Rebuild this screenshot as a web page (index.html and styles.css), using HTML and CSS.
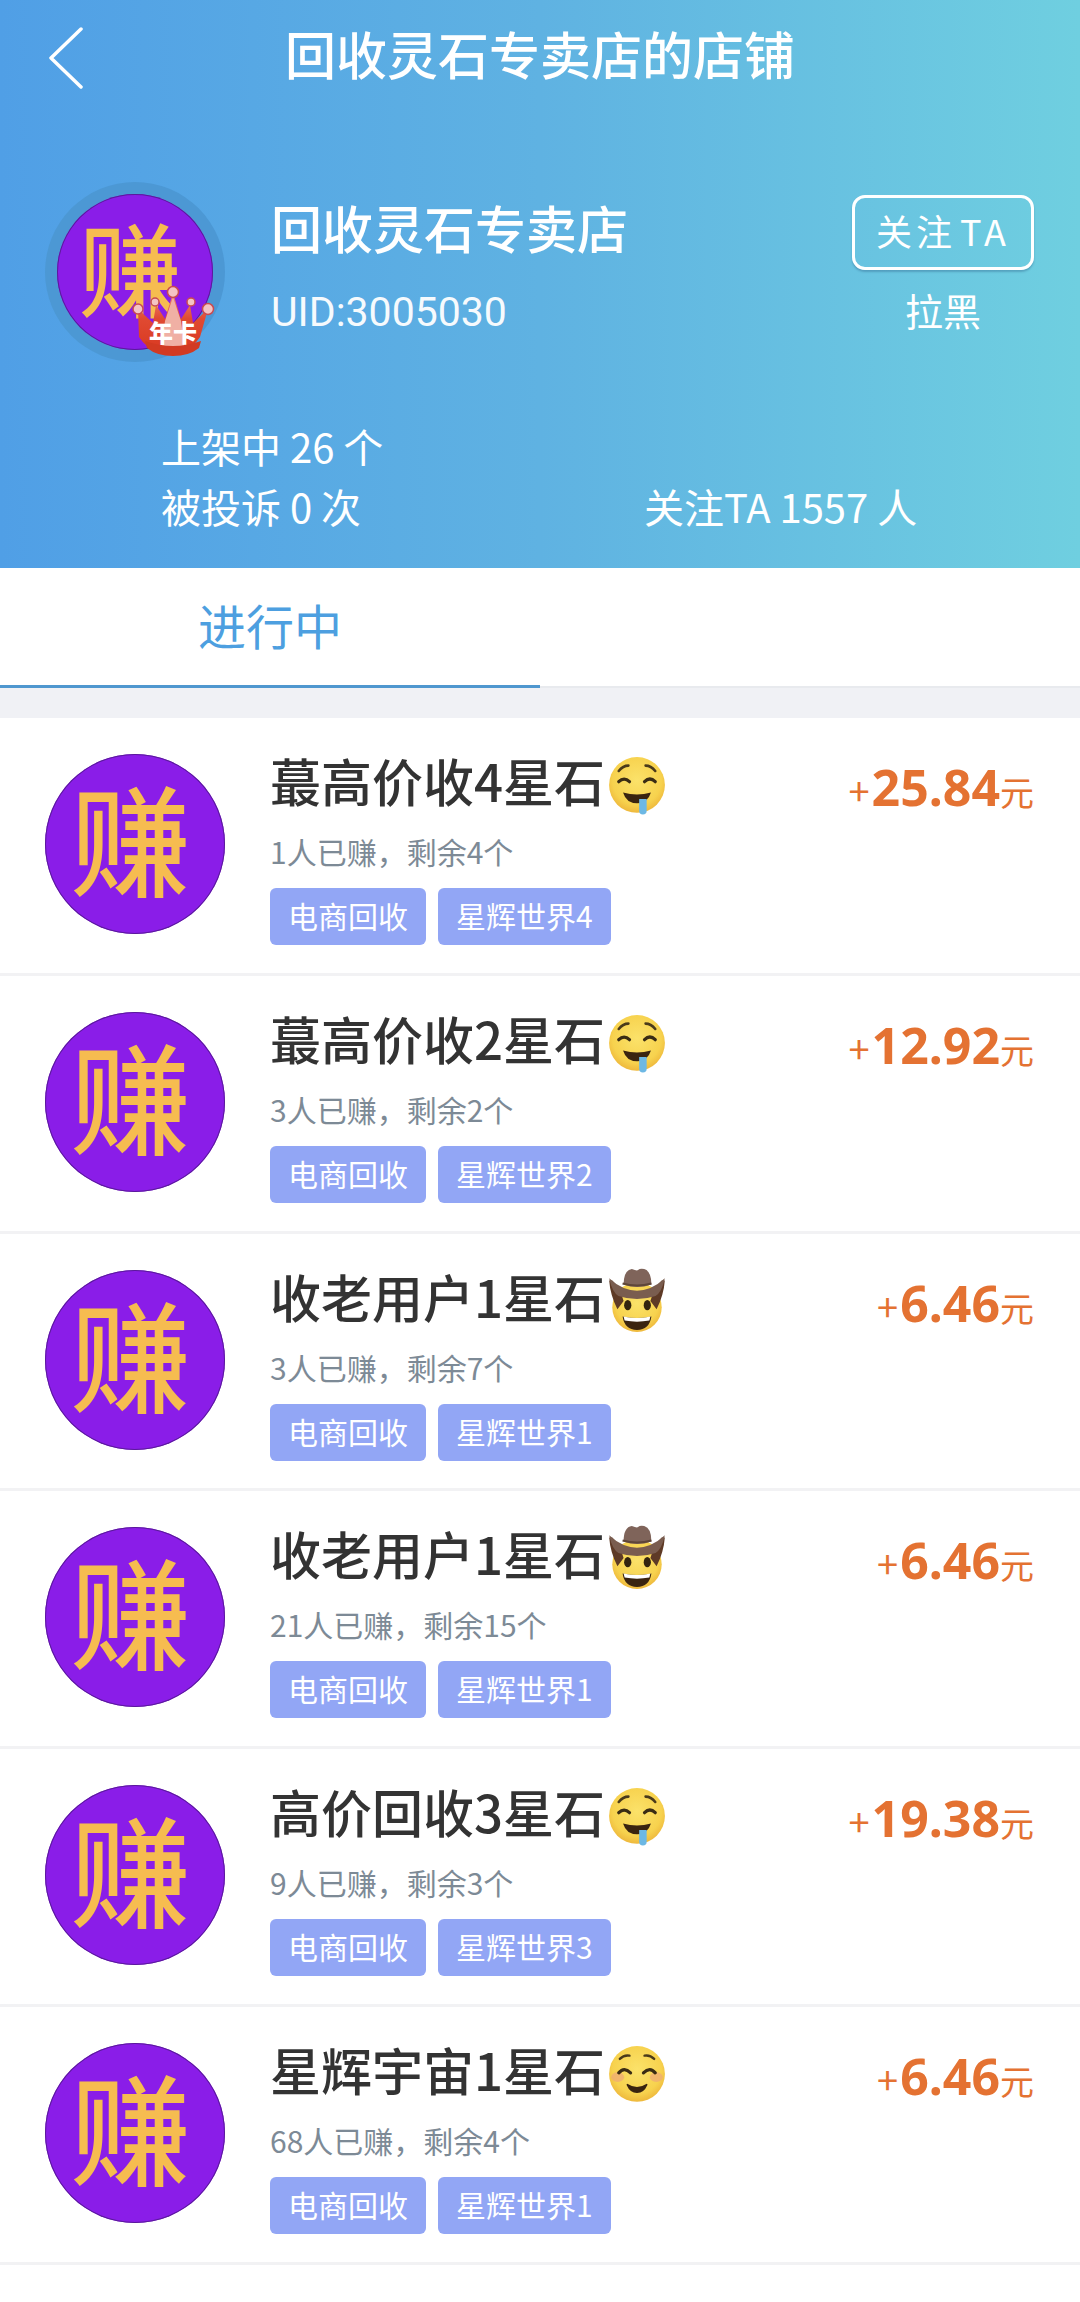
FILE: index.html
```html
<!DOCTYPE html>
<html lang="zh">
<head>
<meta charset="utf-8">
<title>回收灵石专卖店的店铺</title>
<link rel="stylesheet" href="styles.css">
</head>
<body>
<svg class="defs" width="0" height="0" aria-hidden="true">
  <defs>
    <radialGradient id="face" cx="50%" cy="42%" r="58%">
      <stop offset="0" stop-color="#fbe26a"/><stop offset=".75" stop-color="#f7d24e"/><stop offset="1" stop-color="#eeb83c"/>
    </radialGradient>
    <linearGradient id="crown" x1="0" y1="0" x2="0" y2="1">
      <stop offset="0" stop-color="#ee8a78"/><stop offset=".45" stop-color="#e04a32"/><stop offset="1" stop-color="#d93a22"/>
    </linearGradient>
    <symbol id="e-drool" viewBox="0 0 54 54">
      <circle cx="27" cy="26" r="26" fill="url(#face)"/>
      <path d="M10 13q4-5 9-5M44 13q-4-5-9-5" fill="none" stroke="#4a3a1a" stroke-width="2.400" stroke-linecap="round"/>
      <path d="M10 23q5-5 10 0M34 23q5-5 10 0" fill="none" stroke="#3a2c14" stroke-width="3" stroke-linecap="round"/>
      <path d="M14 33q13 4 26 0q-3 10-13 10t-13-10z" fill="#3a2410"/>
      <path d="M29 39h7v11a3.500 3.500 0 0 1-7 0z" fill="#6db8e4"/>
    </symbol>
    <symbol id="e-smile" viewBox="0 0 54 54">
      <circle cx="27" cy="26" r="26" fill="url(#face)"/>
      <ellipse cx="9" cy="29" rx="6" ry="4.500" fill="#eea878" opacity=".7"/>
      <ellipse cx="45" cy="29" rx="6" ry="4.500" fill="#eea878" opacity=".7"/>
      <path d="M11 12q4-4 9-3M43 12q-4-4-9-3" fill="none" stroke="#4a3a1a" stroke-width="2.200" stroke-linecap="round"/>
      <path d="M10 25q5-6 11 0M33 25q6-6 11 0" fill="none" stroke="#3a2c14" stroke-width="3" stroke-linecap="round"/>
      <path d="M18 36q9 6 18 0q-3 7-9 7t-9-7z" fill="#3a2410" stroke="#3a2410" stroke-width="1.500" stroke-linejoin="round"/>
    </symbol>
    <symbol id="e-cowboy" viewBox="0 0 58 66">
      <circle cx="29" cy="40" r="24" fill="url(#face)"/>
      <path d="M5 14q8 8 11 20l-6 8Q3 28 2 14zM53 14q-8 8-11 20l6 8q7-14 8-28z" fill="#5e3a26"/>
      <path d="M2 12q13 12 27 12t27-12q-3 14-9 17q-18 6-36 0Q5 26 2 12z" fill="#7a5d4f"/>
      <path d="M16 18q0-14 8-15q5 2 6 1q2-2 6-1q7 2 7 15q-14 5-27 0z" fill="#7f645a"/>
      <path d="M15 17q14 4 28 0" fill="none" stroke="#5e463a" stroke-width="2"/>
      <ellipse cx="20" cy="38" rx="3.500" ry="5" fill="#33240f"/>
      <ellipse cx="39" cy="38" rx="3.500" ry="5" fill="#33240f"/>
      <path d="M15 49q14 3 28 0q-2 13-14 13t-14-13z" fill="#3a2410"/>
      <path d="M16 49q13 3 26 0l-1 4q-12 2-24 0z" fill="#fff"/>
    </symbol>
  </defs>
</svg>

<header class="shop">
  <div class="topbar">
    <svg class="back" width="36" height="62" viewBox="0 0 36 62" fill="none" stroke="#fff" stroke-width="3.500" stroke-linecap="round" stroke-linejoin="round"><path d="M33 2 3 31l30 29"/></svg>
    <h1 class="topbar-title">回收灵石专卖店的店铺</h1>
  </div>
  <div class="profile">
    <div class="shop-avatar">
      <span class="coin coin-small">赚</span>
      <div class="crown">
        <svg width="84" height="72" viewBox="0 0 84 72">
          <path d="M7 24l15 14L25 20l9 14L42 8l8 26 9-14 3 18 15-14-8 28q-8 12-17 13H25q-9-1-17-13z" fill="url(#crown)"/>
          <path d="M30 66 34 36l8-24 8 24 4 30q-12 3-24 0z" fill="#f0b0a4"/>
          <path d="M14 56q28 10 56 0l-2 7q-10 8-26 8t-26-8z" fill="#d23a22"/>
          <g fill="#f4c4c4" stroke="#c94a50" stroke-width="1.500"><circle cx="7" cy="24" r="5"/><circle cx="24" cy="17" r="4"/><circle cx="42" cy="7" r="5.500"/><circle cx="60" cy="17" r="4"/><circle cx="77" cy="24" r="5.500"/></g>
        </svg>
        <span class="crown-text">年卡</span>
      </div>
    </div>
    <div class="shop-info">
      <div class="shop-name">回收灵石专卖店</div>
      <div class="shop-uid">UID:3005030</div>
    </div>
    <div class="shop-actions">
      <button class="follow">关注 TA</button>
      <div class="block">拉黑</div>
    </div>
  </div>
  <div class="stats">
    <div>上架中 26 个</div>
    <div></div>
    <div>被投诉 0 次</div>
    <div>关注TA 1557 人</div>
  </div>
</header>

<nav class="tabs">
  <div class="tab active">进行中</div>
  <div class="tab"></div>
</nav>
<div class="band"></div>

<main class="list">
  <article class="row">
    <span class="coin">赚</span>
    <div class="row-body">
      <div class="row-title">蕞高价收4星石<svg class="emoji" width="58" height="58" viewBox="0 0 54 54"><use href="#e-drool"/></svg></div>
      <div class="row-sub">1人已赚，剩余4个</div>
      <div class="tags"><span class="tag">电商回收</span><span class="tag">星辉世界4</span></div>
    </div>
    <div class="price"><span class="plus">+</span><b>25.84</b><span class="unit">元</span></div>
  </article>
  <article class="row">
    <span class="coin">赚</span>
    <div class="row-body">
      <div class="row-title">蕞高价收2星石<svg class="emoji" width="58" height="58" viewBox="0 0 54 54"><use href="#e-drool"/></svg></div>
      <div class="row-sub">3人已赚，剩余2个</div>
      <div class="tags"><span class="tag">电商回收</span><span class="tag">星辉世界2</span></div>
    </div>
    <div class="price"><span class="plus">+</span><b>12.92</b><span class="unit">元</span></div>
  </article>
  <article class="row">
    <span class="coin">赚</span>
    <div class="row-body">
      <div class="row-title">收老用户1星石<svg class="emoji emoji-hat" width="60" height="68" viewBox="0 0 58 66"><use href="#e-cowboy"/></svg></div>
      <div class="row-sub">3人已赚，剩余7个</div>
      <div class="tags"><span class="tag">电商回收</span><span class="tag">星辉世界1</span></div>
    </div>
    <div class="price"><span class="plus">+</span><b>6.46</b><span class="unit">元</span></div>
  </article>
  <article class="row">
    <span class="coin">赚</span>
    <div class="row-body">
      <div class="row-title">收老用户1星石<svg class="emoji emoji-hat" width="60" height="68" viewBox="0 0 58 66"><use href="#e-cowboy"/></svg></div>
      <div class="row-sub">21人已赚，剩余15个</div>
      <div class="tags"><span class="tag">电商回收</span><span class="tag">星辉世界1</span></div>
    </div>
    <div class="price"><span class="plus">+</span><b>6.46</b><span class="unit">元</span></div>
  </article>
  <article class="row">
    <span class="coin">赚</span>
    <div class="row-body">
      <div class="row-title">高价回收3星石<svg class="emoji" width="58" height="58" viewBox="0 0 54 54"><use href="#e-drool"/></svg></div>
      <div class="row-sub">9人已赚，剩余3个</div>
      <div class="tags"><span class="tag">电商回收</span><span class="tag">星辉世界3</span></div>
    </div>
    <div class="price"><span class="plus">+</span><b>19.38</b><span class="unit">元</span></div>
  </article>
  <article class="row">
    <span class="coin">赚</span>
    <div class="row-body">
      <div class="row-title">星辉宇宙1星石<svg class="emoji" width="58" height="58" viewBox="0 0 54 54"><use href="#e-smile"/></svg></div>
      <div class="row-sub">68人已赚，剩余4个</div>
      <div class="tags"><span class="tag">电商回收</span><span class="tag">星辉世界1</span></div>
    </div>
    <div class="price"><span class="plus">+</span><b>6.46</b><span class="unit">元</span></div>
  </article>
</main>
</body>
</html>
```

FILE: styles.css
```css
* { box-sizing: border-box; }
html, body { margin: 0; padding: 0; }
body {
  width: 1080px;
  height: 2302px;
  overflow: hidden;
  background: #fff;
  font-family: "Noto Sans CJK SC", "Noto Sans", sans-serif;
  color: #333;
}
.defs { display: block; height: 0; }

.shop {
  height: 568px;
  background: linear-gradient(90deg, #509fe6 0%, #5fb2e2 50%, #6fcfe0 100%);
  color: #fff;
}
.topbar {
  height: 110px;
  display: flex;
  align-items: center;
  justify-content: center;
  position: relative;
}
.back { position: absolute; left: 48px; top: 27px; }
.topbar-title { margin: 0 0 4px; font-size: 51px; font-weight: 500; line-height: 60px; }

.profile {
  display: flex;
  align-items: flex-start;
  padding: 72px 46px 0 45px;
}
.shop-avatar {
  position: relative;
  width: 180px;
  height: 180px;
  border-radius: 50%;
  background: #4c98d4;
  display: flex;
  align-items: center;
  justify-content: center;
  flex: none;
}
.coin {
  width: 180px;
  height: 180px;
  flex: none;
  border-radius: 50%;
  background: #8a1de8;
  box-shadow: inset 0 0 0 1px #5a1a9a;
  color: #f6bc50;
  font-size: 120px;
  font-weight: 500;
  line-height: 164px;
  text-indent: -9px;
  text-align: center;
}
.coin-small {
  width: 156px;
  height: 156px;
  font-size: 102px;
  line-height: 143px;
  text-indent: -10px;
}
.crown { position: absolute; left: 86px; top: 103px; width: 84px; height: 72px; }
.crown svg { display: block; }
.crown-text {
  position: absolute;
  left: 15px;
  top: 32px;
  width: 54px;
  text-align: center;
  font-size: 24px;
  line-height: 30px;
  font-weight: 900;
  color: #fff;
}
.shop-info { margin-left: 46px; flex: 1; padding-top: 15px; }
.shop-name { font-size: 51px; font-weight: 500; line-height: 60px; }
.shop-uid { font-size: 41px; line-height: 50px; margin-top: 30px; font-family: Roboto, "Noto Sans", sans-serif; opacity: .95; }
.shop-actions { width: 182px; display: flex; flex-direction: column; align-items: center; padding-top: 13px; }
.follow {
  width: 182px;
  height: 75px;
  padding: 0 0 6px;
  background: transparent;
  border: 3px solid #fff;
  border-radius: 13px;
  box-shadow: 0 2px 2px rgba(40, 90, 130, .35);
  color: #fff;
  font: 400 36px/1 "Noto Sans CJK SC", sans-serif;
  letter-spacing: 4px;
  word-spacing: -8px;
}
.block { font-size: 38px; line-height: 50px; margin-top: 15px; }

.stats {
  display: grid;
  grid-template-columns: 483px 1fr;
  grid-auto-rows: 60px;
  margin-top: 54px;
  padding-left: 161px;
  font-size: 40px;
  line-height: 60px;
}

.tabs { display: flex; height: 120px; background: #fff; border-bottom: 2px solid #e8eaee; }
.tab { width: 540px; height: 120px; text-align: center; font-size: 48px; line-height: 112px; }
.tab.active { color: #4d9fe0; border-bottom: 3px solid #4f97cf; }
.band { height: 30px; background: #f0f1f5; }

.list { display: block; }
.row {
  display: flex;
  align-items: flex-start;
  height: 257.8px;
  padding: 36px 46px 0 45px;
  border-bottom: 3px solid #f2f2f4;
}
.row-body { margin-left: 45px; flex: 1; min-width: 0; }
.row-title {
  display: flex;
  align-items: center;
  height: 52px;
  font-size: 51px;
  font-weight: 500;
  line-height: 52px;
  color: #333;
}
.emoji { flex: none; margin-left: 3px; margin-top: 12px; }
.emoji-hat { margin-left: 2px; margin-top: 8px; }
.row-sub { margin-top: 25px; font-size: 30px; line-height: 40px; color: #7d8a96; }
.tags { display: flex; gap: 12px; margin-top: 17px; }
.tag {
  height: 57px;
  padding: 0 18px;
  border-radius: 6px;
  background: #92a6f5;
  color: #fff;
  font-size: 30px;
  line-height: 54px;
}
.price {
  flex: none;
  display: flex;
  align-items: baseline;
  color: #e47232;
  line-height: 66px;
}
.plus { font-size: 38px; margin-right: 2px; }
.price b { font-size: 50px; font-weight: 700; font-family: "Noto Sans", sans-serif; }
.unit { font-size: 34px; }
```
